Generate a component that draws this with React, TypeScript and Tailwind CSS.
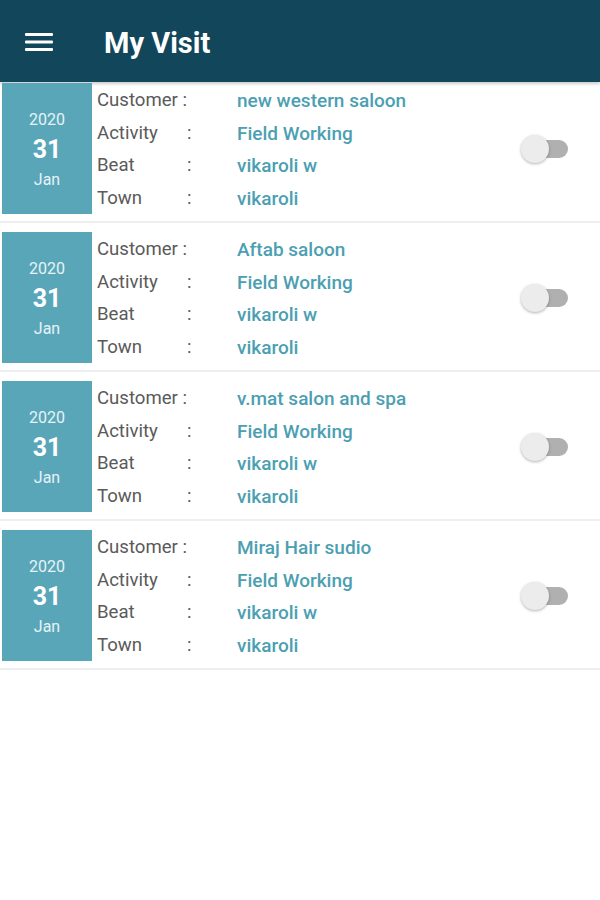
import { useState } from 'react'

interface Visit {
  id: number
  customer: string
  activity: string
  beat: string
  town: string
}

const visits: Visit[] = [
  { id: 1, customer: 'new western saloon', activity: 'Field Working', beat: 'vikaroli w', town: 'vikaroli' },
  { id: 2, customer: 'Aftab saloon', activity: 'Field Working', beat: 'vikaroli w', town: 'vikaroli' },
  { id: 3, customer: 'v.mat salon and spa', activity: 'Field Working', beat: 'vikaroli w', town: 'vikaroli' },
  { id: 4, customer: 'Miraj Hair sudio', activity: 'Field Working', beat: 'vikaroli w', town: 'vikaroli' },
]

function Row({ label, value, inlineColon }: { label: string; value: string; inlineColon?: boolean }) {
  return (
    <div className="flex h-[32.5px] items-center">
      <span className="w-[90px] shrink-0 whitespace-nowrap text-[18.6px] text-[#5a5a5a]">
        {inlineColon ? `${label} :` : label}
      </span>
      <span className="w-[50px] shrink-0 text-[18.6px] text-[#5a5a5a]">{inlineColon ? '' : ':'}</span>
      <span className="text-[19px] font-medium text-[#4c9fb2]">{value}</span>
    </div>
  )
}

function Toggle() {
  const [on, setOn] = useState(false)
  return (
    <button type="button" onClick={() => setOn(!on)} className="relative h-[30px] w-[48px]">
      <span className={`absolute left-[9px] top-[6px] h-[18px] w-[38px] rounded-full ${on ? 'bg-[#9fd0dc]' : 'bg-[#b0b0b0]'}`} />
      <span
        className={`absolute top-[1px] h-[28px] w-[28px] rounded-full shadow-[0_1px_3px_rgba(0,0,0,0.3)] ${on ? 'left-[19px] bg-[#5aa6b9]' : 'left-0 bg-[#ececec]'}`}
      />
    </button>
  )
}

function VisitCard({ visit, first }: { visit: Visit; first: boolean }) {
  return (
    <div className={`flex border-b-2 border-[#eeeeee] pb-[7px] ${first ? 'pt-[1px]' : 'pt-[9px]'}`}>
      <div className="ml-[2px] flex h-[131px] w-[90px] shrink-0 flex-col items-center justify-center bg-[#5aa6b9] pt-[3px] text-[#e6f3f6]">
        <span className="text-[16px] leading-[30px]">2020</span>
        <span className="text-[25px] font-bold leading-[30px] text-white">31</span>
        <span className="text-[16px] leading-[30px]">Jan</span>
      </div>
      <div className="ml-[5px] h-[131px] flex-1 pt-[2px]">
        <Row label="Customer" value={visit.customer} inlineColon />
        <Row label="Activity" value={visit.activity} />
        <Row label="Beat" value={visit.beat} />
        <Row label="Town" value={visit.town} />
      </div>
      <div className="mr-[31px] flex items-center">
        <Toggle />
      </div>
    </div>
  )
}

export default function App() {
  return (
    <div className="min-h-[900px] w-[600px] bg-white font-['Roboto',sans-serif]">
      <header className="flex h-[82px] items-center bg-[#12475b] pt-[5px] shadow-[0_2px_3px_rgba(0,0,0,0.2)]">
        <svg className="ml-[25px] -mt-[3px]" width="28" height="22" viewBox="0 0 28 22">
          <rect x="0" y="2" width="28" height="3" rx="1" fill="#fff" />
          <rect x="0" y="9.5" width="28" height="3" rx="1" fill="#fff" />
          <rect x="0" y="17" width="28" height="3" rx="1" fill="#fff" />
        </svg>
        <h1 className="ml-[51px] text-[29px] font-bold text-white">My Visit</h1>
      </header>
      <main>
        {visits.map((v, i) => (
          <VisitCard key={v.id} visit={v} first={i === 0} />
        ))}
      </main>
    </div>
  )
}
